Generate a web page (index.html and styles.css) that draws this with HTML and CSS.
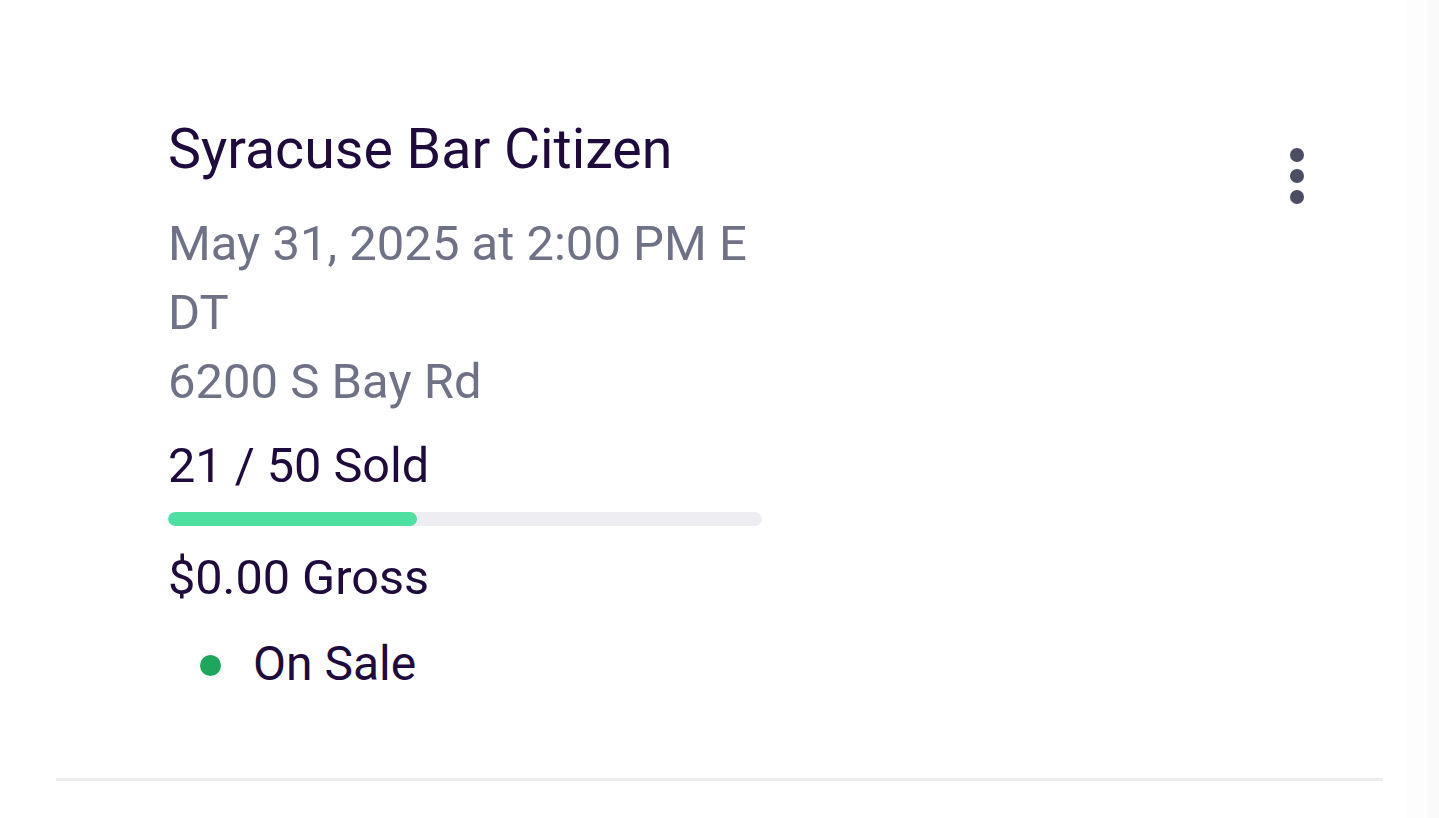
FILE: index.html
```html
<!DOCTYPE html>
<html lang="en">
<head>
<meta charset="utf-8">
<title>Syracuse Bar Citizen</title>
<link rel="stylesheet" href="styles.css">
</head>
<body>
<div class="page">
  <main class="main">
    <article class="card">
      <div class="info">
        <h1 class="title">Syracuse Bar Citizen</h1>
        <p class="meta date">May 31, 2025 at 2:00 PM EDT</p>
        <p class="meta">6200 S Bay Rd</p>
        <p class="stat sold">21 / 50 Sold</p>
        <div class="bar"><div class="bar-fill" style="width: 42%"></div></div>
        <p class="stat gross">$0.00 Gross</p>
        <div class="status">
          <span class="status-dot"></span>
          <span class="status-label">On Sale</span>
        </div>
      </div>
      <button class="kebab" type="button" aria-label="More actions">
        <span class="kebab-dot"></span>
        <span class="kebab-dot"></span>
        <span class="kebab-dot"></span>
      </button>
    </article>
  </main>
  <div class="edge"></div>
</div>
</body>
</html>
```

FILE: styles.css
```css
html, body {
  margin: 0;
  padding: 0;
  background: #ffffff;
}

body {
  font-family: Roboto, "Liberation Sans", Arial, sans-serif;
  color: #1e0a3c;
}

.page {
  display: flex;
  min-height: 100vh;
}

.main {
  flex: 1;
  padding: 0 24px 0 56px;
}

.edge {
  width: 32px;
  background: linear-gradient(to right, #fdfdfd 0, #fdfdfd 20px, #fafafa 20px, #fafafa 100%);
}

.card {
  display: flex;
  justify-content: space-between;
  align-items: flex-start;
  padding: 114px 79px 80px 112px;
  border-bottom: 3px solid #ececec;
}

.info {
  width: 594px;
}

.title {
  margin: 0;
  font-size: 55.5px;
  line-height: 72px;
  font-weight: 400;
  color: #1e0a3c;
}

.meta {
  margin: 0;
  font-size: 49px;
  line-height: 69px;
  color: #6f7287;
  word-break: break-all;
}

.date {
  margin-top: 23px;
}

.stat {
  margin: 0;
  font-size: 48.6px;
  line-height: 69px;
  color: #1e0a3c;
}

.sold {
  margin-top: 15px;
}

.bar {
  margin-top: 12px;
  height: 14px;
  border-radius: 7px;
  background: #eeedf2;
  overflow: hidden;
}

.bar-fill {
  height: 100%;
  border-radius: 7px;
  background: #4de0a0;
}

.gross {
  margin-top: 17px;
}

.status {
  margin-top: 17px;
  display: flex;
  align-items: center;
  padding-left: 32px;
  gap: 32px;
}

.status-dot {
  width: 21px;
  height: 21px;
  border-radius: 50%;
  background: #1fa65e;
  margin-top: 3px;
}

.status-label {
  font-size: 48px;
  line-height: 69px;
  color: #1e0a3c;
}

.kebab {
  margin: 34px 0 0 0;
  padding: 0;
  border: 0;
  background: transparent;
  display: flex;
  flex-direction: column;
  gap: 7px;
  cursor: pointer;
}

.kebab-dot {
  display: block;
  width: 14px;
  height: 14px;
  border-radius: 50%;
  background: #4b4d63;
}
```
